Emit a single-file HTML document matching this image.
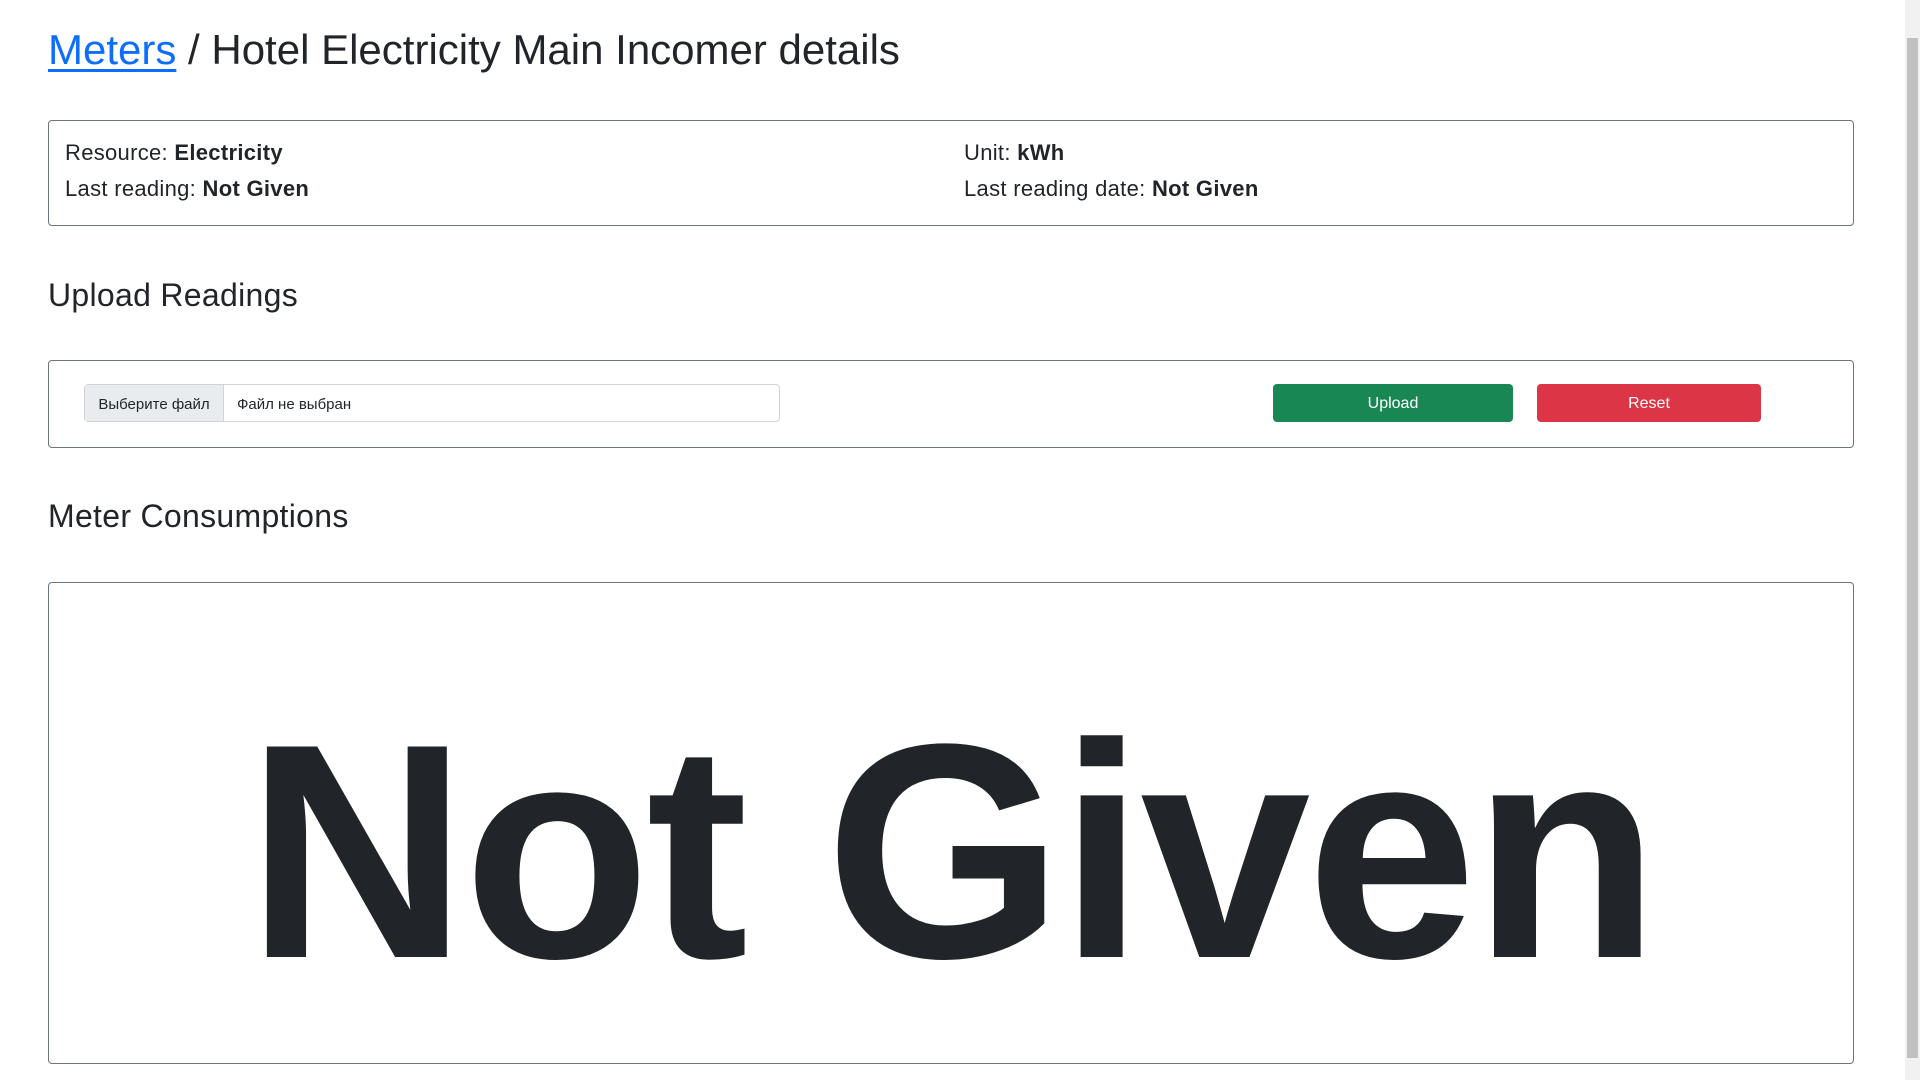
<!DOCTYPE html>
<html><head><meta charset="utf-8"><style>
html,body{margin:0;padding:0;background:#fff;overflow:hidden}
body{width:1920px;height:1080px;position:relative;font-family:"Liberation Sans",sans-serif;color:#212529}
.abs{position:absolute}
h1{position:absolute;left:48px;top:26px;margin:0;font-size:42px;font-weight:normal;white-space:nowrap;letter-spacing:0px}
h1 a{color:#0d6efd;text-decoration:underline;text-decoration-thickness:3px;text-underline-offset:5px}
.box{position:absolute;left:48px;width:1804px;border:1px solid #6c757d;border-radius:4px}
.t{position:absolute;font-size:22px;white-space:nowrap;letter-spacing:0.3px}
h2{position:absolute;left:48px;margin:0;font-size:32px;font-weight:normal;white-space:nowrap;letter-spacing:0.3px}
.btn{position:absolute;top:384px;height:38px;border-radius:4px;color:#fff;font-size:16px;display:flex;align-items:center;justify-content:center;padding-top:2px;box-sizing:border-box}
.sb{position:absolute;right:0;top:0;width:15px;height:1080px;background:#f1f1f1}
.sb div{position:absolute;left:2px;top:38px;width:11px;height:1020px;background:#c1c1c1}
</style></head><body>
<h1><a>Meters</a> / Hotel Electricity Main Incomer details</h1>
<div class="box" style="top:120px;height:104px"></div>
<div class="t" style="left:65px;top:140px">Resource: <b>Electricity</b></div>
<div class="t" style="left:65px;top:176px">Last reading: <b>Not Given</b></div>
<div class="t" style="left:964px;top:140px">Unit: <b>kWh</b></div>
<div class="t" style="left:964px;top:176px">Last reading date: <b>Not Given</b></div>
<h2 style="top:277px">Upload Readings</h2>
<div class="box" style="top:360px;height:86px"></div>
<div class="abs" style="left:84px;top:384px;width:694px;height:36px;border:1px solid #ced4da;border-radius:4px;font-size:15px">
<div class="abs" style="left:0;top:0;width:139px;height:36px;background:#e9ecef;border-right:1px solid #ced4da;display:flex;align-items:center;justify-content:center;padding-top:2px;box-sizing:border-box">Выберите файл</div>
<div class="abs" style="left:152px;top:11px">Файл не выбран</div></div>
<div class="btn" style="left:1273px;width:240px;background:#198754">Upload</div>
<div class="btn" style="left:1537px;width:224px;background:#dc3545">Reset</div>
<h2 style="top:498px">Meter Consumptions</h2>
<div class="box" style="top:582px;height:480px"></div>
<div class="abs" style="left:48px;width:1806px;top:698px;text-align:center;font-size:306px;font-weight:bold;line-height:1;white-space:nowrap;letter-spacing:-4px">Not Given</div>
<div class="sb"><div></div></div>
</body></html>
